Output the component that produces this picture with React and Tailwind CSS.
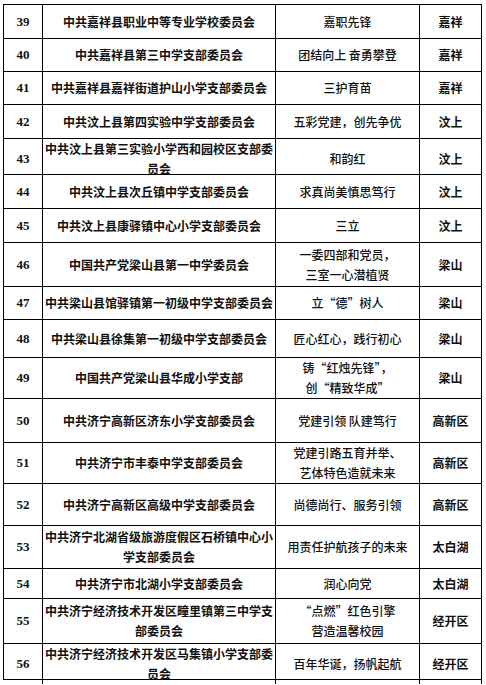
import React from "react";

const rows = [
  { no: 39, h: "h-[34px]", name: ["中共嘉祥县职业中等专业学校委员会"], slogan: ["嘉职先锋"], area: "嘉祥" },
  { no: 40, h: "h-[33px]", name: ["中共嘉祥县第三中学支部委员会"], slogan: ["团结向上 奋勇攀登"], area: "嘉祥" },
  { no: 41, h: "h-[33px]", name: ["中共嘉祥县嘉祥街道护山小学支部委员会"], slogan: ["三护育苗"], area: "嘉祥" },
  { no: 42, h: "h-[34px]", name: ["中共汶上县第四实验中学支部委员会"], slogan: ["五彩党建，创先争优"], area: "汶上" },
  { no: 43, h: "h-[36px]", name: ["中共汶上县第三实验小学西和园校区支部委", "员会"], slogan: ["和韵红"], area: "汶上" },
  { no: 44, h: "h-[34px]", name: ["中共汶上县次丘镇中学支部委员会"], slogan: ["求真尚美慎思笃行"], area: "汶上" },
  { no: 45, h: "h-[34px]", name: ["中共汶上县康驿镇中心小学支部委员会"], slogan: ["三立"], area: "汶上" },
  { no: 46, h: "h-[44px]", name: ["中国共产党梁山县第一中学委员会"], slogan: ["一委四部和党员，", "三室一心潜植贤"], area: "梁山" },
  { no: 47, h: "h-[33px]", name: ["中共梁山县馆驿镇第一初级中学支部委员会"], slogan: ["立“德”树人"], area: "梁山" },
  { no: 48, h: "h-[38px]", name: ["中共梁山县徐集第一初级中学支部委员会"], slogan: ["匠心红心，践行初心"], area: "梁山" },
  { no: 49, h: "h-[41px]", name: ["中国共产党梁山县华成小学支部"], slogan: ["铸“红烛先锋”，", "创“精致华成”"], area: "梁山" },
  { no: 50, h: "h-[44px]", name: ["中共济宁高新区济东小学支部委员会"], slogan: ["党建引领 队建笃行"], area: "高新区" },
  { no: 51, h: "h-[41px]", name: ["中共济宁市丰泰中学支部委员会"], slogan: ["党建引路五育并举、", "艺体特色造就未来"], area: "高新区" },
  { no: 52, h: "h-[42px]", name: ["中共济宁高新区高级中学支部委员会"], slogan: ["尚德尚行、服务引领"], area: "高新区" },
  { no: 53, h: "h-[43px]", name: ["中共济宁北湖省级旅游度假区石桥镇中心小", "学支部委员会"], slogan: ["用责任护航孩子的未来"], area: "太白湖" },
  { no: 54, h: "h-[30px]", name: ["中共济宁市北湖小学支部委员会"], slogan: ["润心向党"], area: "太白湖" },
  { no: 55, h: "h-[45px]", name: ["中共济宁经济技术开发区疃里镇第三中学支", "部委员会"], slogan: ["“点燃”红色引擎", "营造温馨校园"], area: "经开区" },
  { no: 56, h: "h-[36px]", name: ["中共济宁经济技术开发区马集镇小学支部委", "员会"], slogan: ["百年华诞，扬帆起航"], area: "经开区" },
];

const cjk = "font-['Noto_Sans_CJK_SC',sans-serif]";

const Lines = ({ lines }) =>
  lines.map((l, i) => (
    <div key={i} className="whitespace-nowrap">
      {l}
    </div>
  ));

export default function App() {
  return (
    <div className="w-[486px] h-[685px] bg-white pt-[4px] pl-[3px] text-[#111]">
      <div className="w-[479px] border-l border-t border-black">
        {rows.map((r) => (
          <div
            key={r.no}
            className={`grid grid-cols-[39px_233px_144px_62px] border-b border-black ${r.h}`}
          >
            <div className="flex items-center justify-center border-r border-black font-['Liberation_Serif',serif] font-bold text-[13px]">
              {r.no}
            </div>
            <div className={`flex flex-col items-center justify-center border-r border-black text-center text-[12px] leading-[20px] font-bold ${cjk}`}>
              <Lines lines={r.name} />
            </div>
            <div className={`flex flex-col items-center justify-center border-r border-black text-center text-[12px] leading-[20px] font-medium ${cjk}`}>
              <Lines lines={r.slogan} />
            </div>
            <div className={`flex items-center justify-center border-r border-black text-[12px] font-bold ${cjk}`}>
              {r.area}
            </div>
          </div>
        ))}
      </div>
    </div>
  );
}
